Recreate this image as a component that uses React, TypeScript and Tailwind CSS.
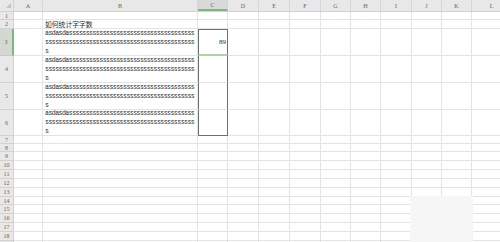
import React from 'react';

const cols = ['A', 'B', 'C', 'D', 'E', 'F', 'G', 'H', 'I', 'J', 'K', 'L'];
const colW = [
  'w-[29px]', 'w-[155px]', 'w-[30px]', 'w-[31px]', 'w-[31px]', 'w-[31px]',
  'w-[30px]', 'w-[30px]', 'w-[31px]', 'w-[30px]', 'w-[30px]', 'w-[40px]',
];

const rows = [
  { n: 1, h: 'h-[8px]' },
  { n: 2, h: 'h-[9px]' },
  { n: 3, h: 'h-[27px]' },
  { n: 4, h: 'h-[27px]' },
  { n: 5, h: 'h-[27px]' },
  { n: 6, h: 'h-[26px]' },
  { n: 7, h: 'h-[8px]' },
  { n: 8, h: 'h-[8px]' },
  { n: 9, h: 'h-[9px]' },
  { n: 10, h: 'h-[9px]' },
  { n: 11, h: 'h-[9px]' },
  { n: 12, h: 'h-[9px]' },
  { n: 13, h: 'h-[9px]' },
  { n: 14, h: 'h-[8px]' },
  { n: 15, h: 'h-[9px]' },
  { n: 16, h: 'h-[9px]' },
  { n: 17, h: 'h-[9px]' },
  { n: 18, h: 'h-[9px]' },
];

const longText = ['asdasda' + 's'.repeat(37), 's'.repeat(44), 's'];

const WrappedText: React.FC = () => (
  <div className="flex flex-col pl-[2px] font-['Liberation_Mono',monospace] text-[6.5px] leading-[9px] tracking-[-0.51px] text-[#2a2a2a] whitespace-pre">
    {longText.map((l, i) => (
      <span key={i}>{l}</span>
    ))}
  </div>
);

const Cell: React.FC<{ row: number; col: number }> = ({ row, col }) => {
  const inRange = col === 2 && row >= 3 && row <= 6;
  let cls = `${colW[col]} h-full shrink-0 flex items-center overflow-hidden `;
  if (inRange) {
    cls += 'border-x border-[#6f6f6f] ';
    cls += row === 3 ? 'border-t border-t-[#6f6f6f] border-b-2 border-b-[#a9d6a2] ' : '';
    cls += row === 6 ? 'border-b border-b-[#6f6f6f] ' : '';
    cls += row === 4 || row === 5 ? 'border-b border-b-[#e4e4e4] ' : '';
  } else {
    cls += 'border-r border-b border-[#e4e4e4] ';
  }

  let content: React.ReactNode = null;
  if (col === 1 && row === 2) {
    content = (
      <span className="pl-[2px] font-['Noto_Sans_CJK_SC',sans-serif] text-[6.8px] leading-none text-[#2a2a2a]">
        如何统计字字数
      </span>
    );
  } else if (col === 1 && row >= 3 && row <= 6) {
    content = <WrappedText />;
  } else if (col === 2 && row === 3) {
    content = (
      <span className="ml-auto pr-[1px] font-['Liberation_Serif',serif] text-[7px] leading-none text-[#2a2a2a]">
        89
      </span>
    );
  }
  return <div className={cls}>{content}</div>;
};

export default function App() {
  return (
    <div className="relative w-[500px] h-[242px] overflow-hidden bg-white">
      {/* column headers */}
      <div className="flex h-[12px] bg-[#e8e8e8] border-b border-[#d2d2d2]">
        <div className="w-[14px] shrink-0 h-full border-r border-[#d2d2d2] flex items-start justify-end pr-[2px] pt-[3px]">
          <svg width="5" height="5" viewBox="0 0 5 5">
            <polygon points="5,0 5,5 0,5" fill="#c4c4c4" />
          </svg>
        </div>
        {cols.map((c, i) => (
          <div
            key={c}
            className={`${colW[i]} shrink-0 h-full flex items-center justify-center border-r border-[#d6d6d6] font-['Liberation_Serif',serif] text-[6px] leading-none text-[#666] ${
              c === 'C' ? 'bg-[#d9d9d9] border-b-2 border-b-[#7fb87f]' : ''
            }`}
          >
            {c}
          </div>
        ))}
      </div>

      {rows.map((r) => (
        <div key={r.n} className={`flex ${r.h}`}>
          <div
            className={`w-[14px] shrink-0 h-full flex items-center justify-center border-b font-['Liberation_Serif',serif] text-[6px] leading-none text-[#666] ${
              r.n === 3
                ? 'bg-[#d3d8d3] border-r-2 border-r-[#7fb87f] border-b-[#c8c8c8]'
                : 'bg-[#e8e8e8] border-r border-[#d2d2d2]'
            }`}
          >
            {r.n}
          </div>
          {cols.map((c, i) => (
            <Cell key={c} row={r.n} col={i} />
          ))}
        </div>
      ))}

      {/* sliver of the next row at the bottom edge */}
      <div className="flex h-[9px]">
        <div className="w-[14px] shrink-0 h-full bg-[#e8e8e8] border-r border-[#d2d2d2]" />
        {cols.map((c, i) => (
          <div key={c} className={`${colW[i]} shrink-0 h-full border-r border-[#e4e4e4]`} />
        ))}
      </div>

      {/* blurred watermark patch */}
      <div className="absolute left-[410px] top-[196px] w-[63px] h-[46px] bg-[#f6f6f6]" />
    </div>
  );
}
